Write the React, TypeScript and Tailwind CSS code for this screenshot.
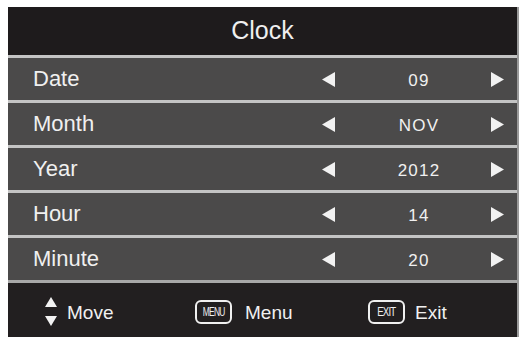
import React from "react";

const LeftArrow = () => (
  <svg width="14" height="15" viewBox="0 0 14 15" className="block">
    <polygon points="13,0 13,15 0,7.5" fill="#f2f2f2" />
  </svg>
);
const RightArrow = () => (
  <svg width="13" height="15" viewBox="0 0 13 15" className="block">
    <polygon points="0,0 0,15 13,7.5" fill="#f2f2f2" />
  </svg>
);

const rows = [
  { label: "Date", value: "09" },
  { label: "Month", value: "NOV" },
  { label: "Year", value: "2012" },
  { label: "Hour", value: "14" },
  { label: "Minute", value: "20" },
];

export default function App() {
  return (
    <div
      className="w-[523px] h-[339px] bg-white pt-[7px] pl-[8px]"
      style={{ fontFamily: '"Liberation Sans", Arial, sans-serif' }}
    >
      <div className="w-[511px] flex flex-col border-r-2 border-[#9a9a9a]">
        <div className="h-[48px] bg-[#1e1b1c] flex items-center justify-center text-[25px] text-[#efefef]">
          Clock
        </div>
        {rows.map((r) => (
          <div
            key={r.label}
            className="h-[45px] border-t-[3px] border-[#c4c4c4] bg-[#4b4a4a] flex items-center pl-[25px] pr-[13px] text-[#f0f0f0]"
          >
            <div className="flex-1 text-[22px] leading-none">{r.label}</div>
            <LeftArrow />
            <div className="w-[138px] ml-[14px] text-center text-[17px] tracking-[1.2px] leading-none pt-[2px]">
              {r.value}
            </div>
            <div className="ml-[3px]">
              <RightArrow />
            </div>
          </div>
        ))}
        <div className="h-[57px] border-t-[3px] border-[#a8a8a8] bg-[#221f20] flex items-center pl-[37px] pt-[4px] text-[#f0f0f0]">
          <div className="w-[150px] flex items-center">
            <svg width="12" height="30" viewBox="0 0 12 30" className="block">
              <polygon points="6,0 12,10 0,10" fill="#f2f2f2" />
              <polygon points="0,19 12,19 6,29" fill="#f2f2f2" />
            </svg>
            <span className="ml-[10px] text-[19px] leading-none">Move</span>
          </div>
          <div className="w-[173px] flex items-center">
            <div className="w-[37px] h-[24px] rounded-[6px] border-2 border-[#f0f0f0] flex items-center justify-center">
              <span className="text-[12px] leading-none tracking-[-1px] scale-x-[0.7] inline-block">
                MENU
              </span>
            </div>
            <span className="ml-[13px] text-[19px] leading-none">Menu</span>
          </div>
          <div className="flex items-center">
            <div className="w-[37px] h-[24px] rounded-[6px] border-2 border-[#f0f0f0] flex items-center justify-center">
              <span className="text-[12px] leading-none tracking-[-1px] scale-x-[0.8] inline-block">
                EXIT
              </span>
            </div>
            <span className="ml-[10px] text-[19px] leading-none">Exit</span>
          </div>
        </div>
      </div>
    </div>
  );
}
